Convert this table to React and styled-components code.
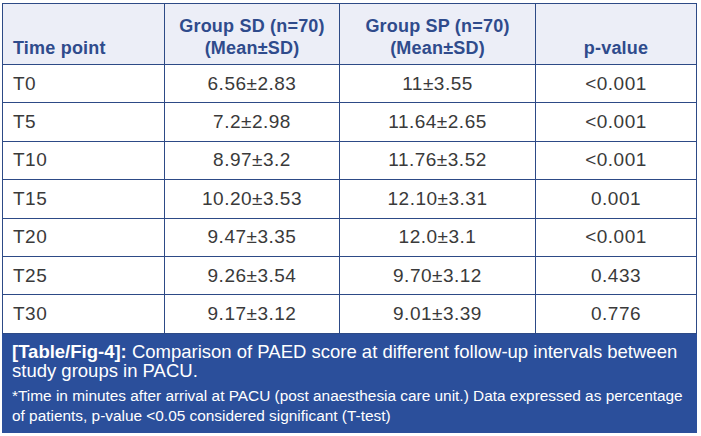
import styled, { createGlobalStyle } from 'styled-components';

const GlobalStyle = createGlobalStyle`
  body {
    margin: 0;
    background: #ffffff;
    font-family: "Liberation Sans", Arial, sans-serif;
  }
`;

const Figure = styled.div`
  width: 695px;
  padding: 3px 0 0 2px;
`;

const Table = styled.table`
  width: 694px;
  border-collapse: collapse;
  table-layout: fixed;
`;

const HeadCell = styled.th`
  height: 55px;
  padding: 0 10px 5px;
  background: #eceef7;
  color: #2f4b8c;
  font-size: 18px;
  font-weight: 700;
  letter-spacing: 0.2px;
  line-height: 22px;
  text-align: ${p => (p.left ? 'left' : 'center')};
  vertical-align: bottom;
  border: 1px solid #2d4a86;
`;

const Cell = styled.td`
  height: 37.4px;
  padding: 0 10px;
  color: #3a3a3a;
  font-size: 19px;
  letter-spacing: 0.5px;
  text-align: ${p => (p.left ? 'left' : 'center')};
  vertical-align: middle;
  border: 1px solid #2d4a86;
`;

const Caption = styled.div`
  width: 695px;
  box-sizing: border-box;
  height: 99px;
  padding: 8px 10px 0;
  background: #2b4f9b;
  color: #ffffff;
  white-space: nowrap;
`;

const Title = styled.p`
  margin: 0;
  font-size: 18.5px;
  line-height: 19px;
`;

const Note = styled.p`
  margin: 6px 0 0;
  font-size: 15.4px;
  line-height: 20px;
`;

const rows = [
  ['T0', '6.56±2.83', '11±3.55', '<0.001'],
  ['T5', '7.2±2.98', '11.64±2.65', '<0.001'],
  ['T10', '8.97±3.2', '11.76±3.52', '<0.001'],
  ['T15', '10.20±3.53', '12.10±3.31', '0.001'],
  ['T20', '9.47±3.35', '12.0±3.1', '<0.001'],
  ['T25', '9.26±3.54', '9.70±3.12', '0.433'],
  ['T30', '9.17±3.12', '9.01±3.39', '0.776'],
];

export default function App() {
  return (
    <>
      <GlobalStyle />
      <Figure>
        <Table>
          <colgroup>
            <col style={{ width: 162 }} />
            <col style={{ width: 175 }} />
            <col style={{ width: 196 }} />
            <col style={{ width: 161 }} />
          </colgroup>
          <thead>
            <tr>
              <HeadCell left>Time point</HeadCell>
              <HeadCell>Group SD (n=70)<br />(Mean±SD)</HeadCell>
              <HeadCell>Group SP (n=70)<br />(Mean±SD)</HeadCell>
              <HeadCell>p-value</HeadCell>
            </tr>
          </thead>
          <tbody>
            {rows.map(r => (
              <tr key={r[0]}>
                <Cell left>{r[0]}</Cell>
                <Cell>{r[1]}</Cell>
                <Cell>{r[2]}</Cell>
                <Cell>{r[3]}</Cell>
              </tr>
            ))}
          </tbody>
        </Table>
        <Caption>
          <Title>
            <b>[Table/Fig-4]:</b> Comparison of PAED score at different follow-up intervals between<br />
            study groups in PACU.
          </Title>
          <Note>
            *Time in minutes after arrival at PACU (post anaesthesia care unit.) Data expressed as percentage<br />
            of patients, p-value &lt;0.05 considered significant (T-test)
          </Note>
        </Caption>
      </Figure>
    </>
  );
}
